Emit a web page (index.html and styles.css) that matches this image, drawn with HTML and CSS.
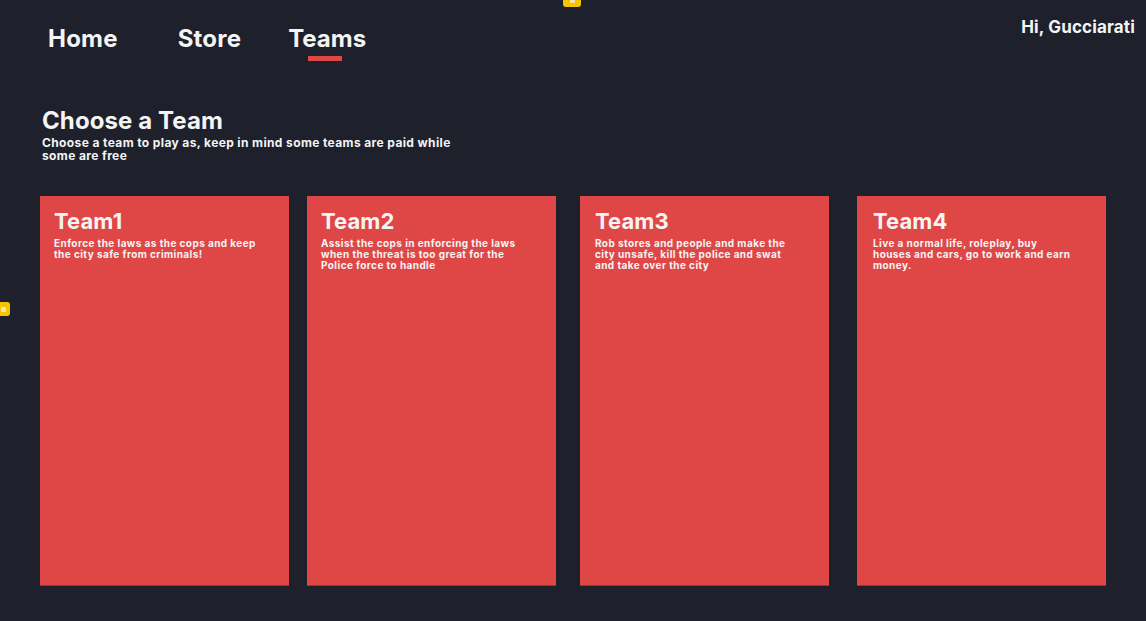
FILE: index.html
```html
<!DOCTYPE html>
<html lang="en">
<head>
    <meta charset="UTF-8">
    <meta name="viewport" content="width=device-width, initial-scale=1.0">
    <title>Choose a Team</title>
    <link rel="stylesheet" href="styles.css">
</head>
<body>
    <span class="pin pin-top"></span>
    <span class="pin pin-left"></span>

    <header class="topbar">
        <nav class="tabs">
            <a class="tab" href="#">Home</a>
            <a class="tab" href="#">Store</a>
            <a class="tab active" href="#">Teams</a>
        </nav>
        <div class="greeting">Hi, Gucciarati</div>
    </header>

    <main class="content">
        <section class="intro">
            <h1>Choose a Team</h1>
            <p>Choose a team to play as, keep in mind some teams are paid while<br>some are free</p>
        </section>

        <div class="teams">
            <div class="team-card">
                <h2>Team1</h2>
                <p>Enforce the laws as the cops and keep<br>the city safe from criminals!</p>
            </div>
            <div class="team-card">
                <h2>Team2</h2>
                <p>Assist the cops in enforcing the laws<br>when the threat is too great for the<br>Police force to handle</p>
            </div>
            <div class="team-card">
                <h2>Team3</h2>
                <p>Rob stores and people and make the<br>city unsafe, kill the police and swat<br>and take over the city</p>
            </div>
            <div class="team-card">
                <h2>Team4</h2>
                <p>Live a normal life, roleplay, buy<br>houses and cars, go to work and earn<br>money.</p>
            </div>
        </div>
    </main>
</body>
</html>
```

FILE: styles.css
```css
body {
    font-family: Inter, 'DejaVu Sans', sans-serif;
    font-weight: 700;
    margin: 0;
    height: 621px;
    overflow: hidden;
    background-color: #1e212c;
    color: #f4f4f4;
}
.topbar {
    display: flex;
    justify-content: space-between;
    align-items: flex-start;
    padding: 0 11px 0 48px;
}
.tabs {
    display: flex;
    gap: 48px;
    padding-top: 24px;
}
.tab {
    position: relative;
    color: #f4f4f4;
    text-decoration: none;
    font-size: 24px;
    line-height: 30px;
    letter-spacing: 0.2px;
}
.tab:first-child {
    margin-right: 12px;
}
.tab:last-child {
    letter-spacing: 0;
    margin-left: -1px;
}
.tab.active::after {
    content: '';
    position: absolute;
    left: 50%;
    top: 32px;
    width: 34px;
    height: 5px;
    margin-left: -19px;
    background-color: #df4747;
}
.greeting {
    padding-top: 17px;
    font-size: 17px;
    line-height: 20px;
    letter-spacing: 0.15px;
}
.content {
    padding: 0 40px;
}
.intro {
    padding: 54px 0 0 2px;
}
.intro h1 {
    margin: 0;
    font-size: 24px;
    line-height: 26px;
    letter-spacing: 0.1px;
}
.intro p {
    margin: 2px 0 0;
    font-size: 12px;
    line-height: 13px;
    letter-spacing: 0.38px;
}
.teams {
    display: flex;
    margin-top: 34px;
}
.team-card {
    width: 249px;
    height: 389px;
    padding: 12px 14px;
    box-sizing: border-box;
    background-color: #df4747;
    box-shadow: 0 1px 0 #9e3438;
}
.team-card:nth-child(2) { margin-left: 18px; }
.team-card:nth-child(3) { margin-left: 24px; padding-left: 15px; }
.team-card:nth-child(4) { margin-left: 28px; padding-left: 16px; }
.team-card h2 {
    margin: 0;
    font-size: 22px;
    line-height: 27px;
    letter-spacing: 0.1px;
}
.team-card p {
    margin: 3px 0 0;
    font-size: 10px;
    line-height: 11px;
    letter-spacing: 0.42px;
}
.pin {
    position: absolute;
    background-color: #f6c400;
    border-radius: 3px;
}
.pin::after {
    content: '';
    position: absolute;
    width: 5px;
    height: 5px;
    background-color: #f8e6a0;
    border-radius: 1px;
}
.pin-top {
    left: 563px;
    top: -4px;
    width: 18px;
    height: 11px;
}
.pin-top::after {
    left: 7px;
    top: 2px;
}
.pin-left {
    left: -4px;
    top: 302px;
    width: 14px;
    height: 14px;
}
.pin-left::after {
    left: 5px;
    top: 5px;
}
```
